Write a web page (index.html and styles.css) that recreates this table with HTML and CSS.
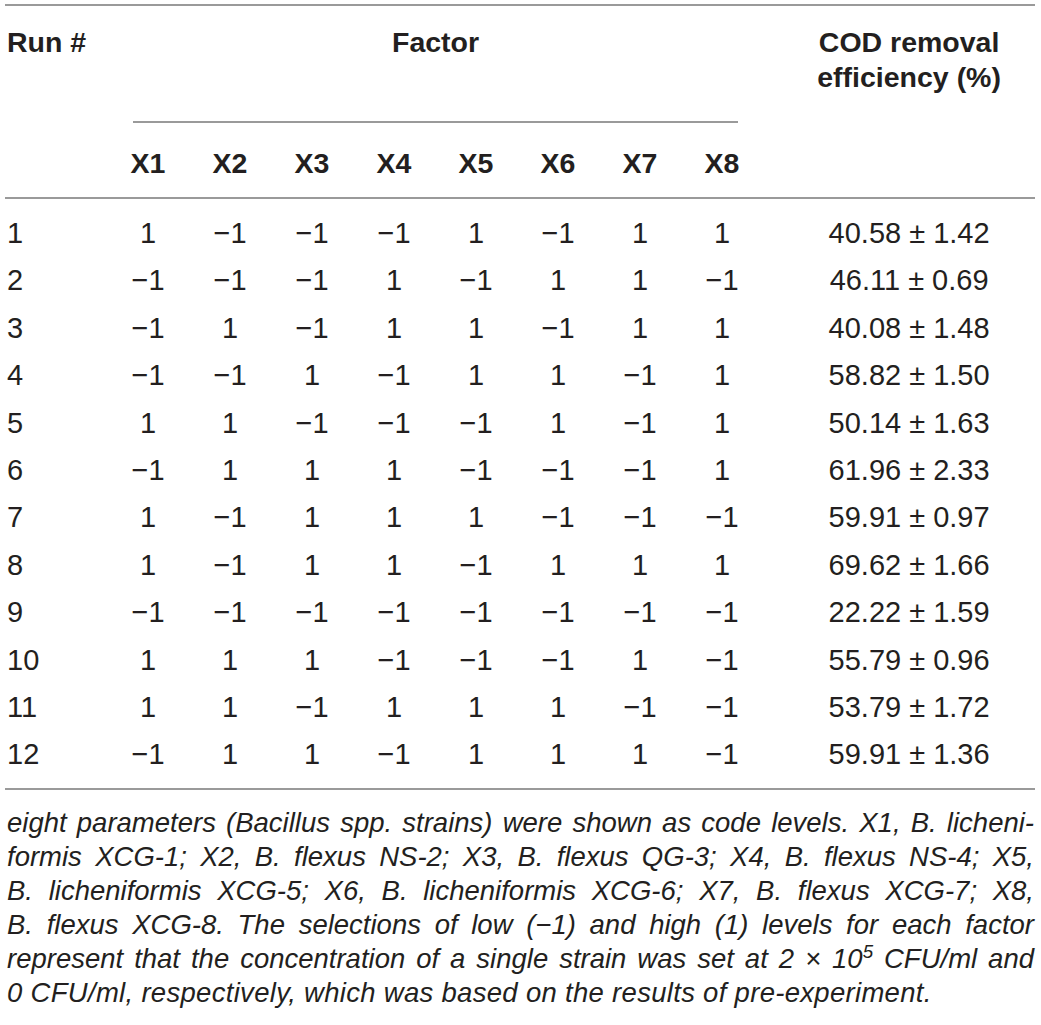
FILE: index.html
```html
<!doctype html>
<html lang="en">
<head>
  <meta charset="UTF-8">
  <title>Plackett-Burman design</title>
  <meta name="viewport" content="width=device-width, initial-scale=1.0">
  <link rel="stylesheet" href="styles.css">
</head>
<body>

  <table class="pb-table">
    <colgroup>
      <col class="c-run">
      <col class="c-x"><col class="c-x"><col class="c-x"><col class="c-x">
      <col class="c-x"><col class="c-x"><col class="c-x"><col class="c-x">
      <col class="c-cod">
    </colgroup>
    <thead>
      <tr>
        <th class="h-run" rowspan="2">Run #</th>
        <th class="h-factor" colspan="8"><div class="factor-rule">Factor</div></th>
        <th class="h-cod" rowspan="2">COD removal<br>efficiency (%)</th>
      </tr>
      <tr class="h-x">
        <th>X1</th><th>X2</th><th>X3</th><th>X4</th>
        <th>X5</th><th>X6</th><th>X7</th><th>X8</th>
      </tr>
    </thead>
    <tbody id="runBody"></tbody>
  </table>

  <div class="footnote">
    <span class="line">eight parameters (Bacillus spp. strains) were shown as code levels. X1, B. licheni-</span>
    <span class="line">formis XCG-1; X2, B. flexus NS-2; X3, B. flexus QG-3; X4, B. flexus NS-4; X5,</span>
    <span class="line">B. licheniformis XCG-5; X6, B. licheniformis XCG-6; X7, B. flexus XCG-7; X8,</span>
    <span class="line">B. flexus XCG-8. The selections of low (&minus;1) and high (1) levels for each factor</span>
    <span class="line">represent that the concentration of a single strain was set at 2 &times; 10<sup>5</sup> CFU/ml and</span>
    <span class="line last">0 CFU/ml, respectively, which was based on the results of pre-experiment.</span>
  </div>

  <script>
    // kode level tiap run, lalu efisiensi COD
    const runs = [
      [[1, -1, -1, -1, 1, -1, 1, 1], "40.58 ± 1.42"],
      [[-1, -1, -1, 1, -1, 1, 1, -1], "46.11 ± 0.69"],
      [[-1, 1, -1, 1, 1, -1, 1, 1], "40.08 ± 1.48"],
      [[-1, -1, 1, -1, 1, 1, -1, 1], "58.82 ± 1.50"],
      [[1, 1, -1, -1, -1, 1, -1, 1], "50.14 ± 1.63"],
      [[-1, 1, 1, 1, -1, -1, -1, 1], "61.96 ± 2.33"],
      [[1, -1, 1, 1, 1, -1, -1, -1], "59.91 ± 0.97"],
      [[1, -1, 1, 1, -1, 1, 1, 1], "69.62 ± 1.66"],
      [[-1, -1, -1, -1, -1, -1, -1, -1], "22.22 ± 1.59"],
      [[1, 1, 1, -1, -1, -1, 1, -1], "55.79 ± 0.96"],
      [[1, 1, -1, 1, 1, 1, -1, -1], "53.79 ± 1.72"],
      [[-1, 1, 1, -1, 1, 1, 1, -1], "59.91 ± 1.36"]
    ];
    const tbody = document.getElementById("runBody");

    runs.forEach(([levels, cod], i) => {
      const row = document.createElement("tr");
      const cells = levels.map(v => `<td>${v < 0 ? "\u22121" : "1"}</td>`).join("");
      row.innerHTML = `<td class="run">${i + 1}</td>${cells}<td class="cod">${cod}</td>`;
      tbody.appendChild(row);
    });
  </script>
</body>
</html>
```

FILE: styles.css
```css
body {
  font-family: "Liberation Sans", Arial, sans-serif;
  margin: 0;
  padding: 4px 6px 0 5px;
  background: #fff;
  color: #231f20;
}

.pb-table {
  width: 1030px;
  table-layout: fixed;
  border-collapse: collapse;
  border-top: 2px solid #9a9a9a;
  border-bottom: 2px solid #9a9a9a;
}
.c-run { width: 102px; }
.c-x { width: 82px; }
.c-cod { width: 272px; }

thead {
  border-bottom: 2px solid #9a9a9a;
}
th {
  font-size: 28.5px;
  font-weight: bold;
  padding: 0;
  line-height: 35px;
}
.h-run {
  text-align: left;
  vertical-align: top;
  padding: 19px 0 0 2px;
}
.h-cod {
  text-align: center;
  vertical-align: top;
  padding: 19px 0 0 20px;
}
.h-factor {
  vertical-align: top;
  padding: 0 25px 0 26px;
}
.factor-rule {
  box-sizing: border-box;
  height: 117px;
  padding-top: 19px;
  border-bottom: 2px solid #9a9a9a;
}
.h-x th {
  height: 68px;
  padding-top: 6px;
  text-align: center;
  vertical-align: middle;
}

td {
  font-size: 29px;
  line-height: 47.4px;
  padding: 0;
  text-align: center;
  white-space: nowrap;
}
td.run {
  text-align: left;
  padding-left: 2px;
}
td.cod {
  padding-left: 20px;
}
tbody tr:first-child td {
  padding-top: 11px;
}
tbody tr:last-child td {
  padding-bottom: 9px;
}

.footnote {
  margin-top: 16px;
  padding: 0 1px 0 2px;
  font-size: 27.5px;
  font-style: italic;
  line-height: 34px;
}
.footnote .line {
  display: block;
  white-space: nowrap;
  text-align: justify;
  text-align-last: justify;
}
.footnote .line.last {
  text-align-last: left;
  letter-spacing: 0.3px;
}
.footnote sup {
  font-size: 0.68em;
  line-height: 0;
}
```
